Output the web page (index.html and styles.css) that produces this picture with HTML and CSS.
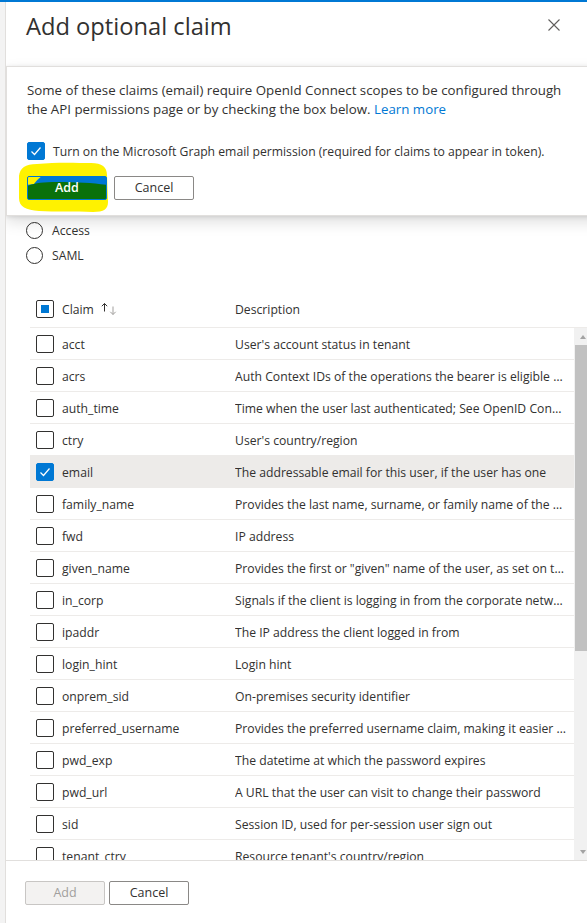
FILE: index.html
```html
<!DOCTYPE html>
<html lang="en">
<head>
  <meta charset="UTF-8">
  <title>Add optional claim</title>
  <link rel="stylesheet" href="styles.css">
</head>
<body>
  <div class="topbar"></div>
  <div class="panel">
    <div class="panel-header">
      <h1 class="panel-title">Add optional claim</h1>
      <button class="close-btn" aria-label="Close">
        <svg width="12" height="12" viewBox="0 0 12 12"><path d="M0.5 0.5 L11.5 11.5 M11.5 0.5 L0.5 11.5" stroke="#605e5c" stroke-width="1.1"/></svg>
      </button>
    </div>

    <div class="panel-body">
      <div class="callout">
        <p class="callout-text">Some of these claims (email) require OpenId Connect scopes to be configured through the API permissions page or by checking the box below. <a href="#">Learn more</a></p>
        <label class="callout-check">
          <span class="check on"><svg width="16" height="16" viewBox="0 0 16 16"><path d="M3.5 8.5 L6.5 11.5 L12.5 4.5" fill="none" stroke="#fff" stroke-width="1.2"/></svg></span>
          Turn on the Microsoft Graph email permission (required for claims to appear in token).
        </label>
        <div class="callout-actions">
          <svg class="highlight" width="92" height="52" viewBox="0 0 92 52"><path d="M2 14 C3 6 8 2 20 2 C40 0 60 1 74 1 C85 1 90 5 90 13 L91 40 C91 47 87 50 76 50 C58 49 38 50 22 49 C9 48 2 45 2 36 Z" fill="#fff200"/></svg>
          <button class="btn primary">
            <svg class="swoosh" width="80" height="24" viewBox="0 0 80 24"><path d="M0 0 L15 0 C11 3 9 5 7 8 L0 9 Z" fill="#fff200"/><path d="M0 10 C8 7 16 6 30 6 C50 6 66 7 80 9 L80 24 L0 24 Z" fill="#0a710a"/></svg>
            <span>Add</span>
          </button>
          <button class="btn">Cancel</button>
        </div>
      </div>

      <div class="field-label">Token type</div>
      <div class="radio-list">
        <label class="radio"><span class="radio-dot"></span>ID</label>
        <label class="radio"><span class="radio-dot"></span>Access</label>
        <label class="radio"><span class="radio-dot"></span>SAML</label>
      </div>

      <div class="claims">
        <div class="claims-head">
          <div class="cell-claim">
            <span class="check partial"></span>
            Claim
            <svg class="sort-icon" width="16" height="14" viewBox="0 0 16 14">
              <path d="M3.5 9.5 V1.5 M0.8 4.2 L3.5 1.5 L6.2 4.2" fill="none" stroke="#323130" stroke-width="1"/>
              <path d="M12 4.5 V12.5 M9.3 9.8 L12 12.5 L14.7 9.8" fill="none" stroke="#a19f9d" stroke-width="1"/>
            </svg>
          </div>
          <div class="cell-desc">Description</div>
        </div>
        <div class="claims-scroll">
          <div class="claims-rows">
            <div class="row"><div class="cell-claim"><span class="check"></span>acct</div><div class="cell-desc">User's account status in tenant</div></div>
            <div class="row"><div class="cell-claim"><span class="check"></span>acrs</div><div class="cell-desc">Auth Context IDs of the operations the bearer is eligible to perform</div></div>
            <div class="row"><div class="cell-claim"><span class="check"></span>auth_time</div><div class="cell-desc">Time when the user last authenticated; See OpenID Connect spec</div></div>
            <div class="row"><div class="cell-claim"><span class="check"></span>ctry</div><div class="cell-desc">User's country/region</div></div>
            <div class="row selected"><div class="cell-claim"><span class="check on"><svg width="16" height="16" viewBox="0 0 16 16"><path d="M3.5 8.5 L6.5 11.5 L12.5 4.5" fill="none" stroke="#fff" stroke-width="1.2"/></svg></span>email</div><div class="cell-desc">The addressable email for this user, if the user has one</div></div>
            <div class="row"><div class="cell-claim"><span class="check"></span>family_name</div><div class="cell-desc">Provides the last name, surname, or family name of the user as defined in the user object</div></div>
            <div class="row"><div class="cell-claim"><span class="check"></span>fwd</div><div class="cell-desc">IP address</div></div>
            <div class="row"><div class="cell-claim"><span class="check"></span>given_name</div><div class="cell-desc">Provides the first or "given" name of the user, as set on the user object</div></div>
            <div class="row"><div class="cell-claim"><span class="check"></span>in_corp</div><div class="cell-desc">Signals if the client is logging in from the corporate network</div></div>
            <div class="row"><div class="cell-claim"><span class="check"></span>ipaddr</div><div class="cell-desc">The IP address the client logged in from</div></div>
            <div class="row"><div class="cell-claim"><span class="check"></span>login_hint</div><div class="cell-desc">Login hint</div></div>
            <div class="row"><div class="cell-claim"><span class="check"></span>onprem_sid</div><div class="cell-desc">On-premises security identifier</div></div>
            <div class="row"><div class="cell-claim"><span class="check"></span>preferred_username</div><div class="cell-desc">Provides the preferred username claim, making it easier for apps to provide username hints</div></div>
            <div class="row"><div class="cell-claim"><span class="check"></span>pwd_exp</div><div class="cell-desc">The datetime at which the password expires</div></div>
            <div class="row"><div class="cell-claim"><span class="check"></span>pwd_url</div><div class="cell-desc">A URL that the user can visit to change their password</div></div>
            <div class="row"><div class="cell-claim"><span class="check"></span>sid</div><div class="cell-desc">Session ID, used for per-session user sign out</div></div>
            <div class="row"><div class="cell-claim"><span class="check"></span>tenant_ctry</div><div class="cell-desc">Resource tenant's country/region</div></div>
            <div class="row"><div class="cell-claim"><span class="check"></span>tenant_region_scope</div><div class="cell-desc">Region of the resource tenant</div></div>
          </div>
          <div class="scrollbar">
            <span class="sb-arrow up"></span>
            <div class="sb-track"><div class="sb-thumb"></div></div>
            <span class="sb-arrow down"></span>
          </div>
        </div>
      </div>
    </div>

    <div class="panel-footer">
      <button class="btn disabled">Add</button>
      <button class="btn">Cancel</button>
    </div>
  </div>
</body>
</html>
```

FILE: styles.css
```css
* {
  box-sizing: border-box;
}
html, body {
  margin: 0;
  height: 100%;
}
body {
  background: #f3f3f3;
  color: #323130;
  font-family: "Open Sans", "Segoe UI", sans-serif;
  font-size: 12.2px;
  overflow: hidden;
}
.topbar {
  height: 2px;
  background: #0078d4;
}
.panel {
  margin-left: 5px;
  height: calc(100% - 2px);
  background: #fff;
  border-left: 1px solid #e1dfdd;
  display: flex;
  flex-direction: column;
  overflow: hidden;
}
.panel-header {
  flex: none;
  height: 64px;
  display: flex;
  justify-content: space-between;
  align-items: flex-start;
  padding: 8px 17px 0 20px;
}
.panel-title {
  margin: 0;
  font-size: 23.7px;
  font-weight: 400;
  line-height: 32px;
}
.close-btn {
  width: 32px;
  height: 32px;
  margin-top: -1px;
  padding: 0;
  border: 0;
  background: none;
  display: flex;
  align-items: center;
  justify-content: center;
}

.panel-body {
  flex: 1;
  min-height: 0;
  position: relative;
  display: flex;
  flex-direction: column;
  padding: 102px 0 0 20px;
}

/* popup callout */
.callout {
  position: absolute;
  top: 0;
  left: 0;
  right: -20px;
  height: 150px;
  padding: 14px 20px 0 20px;
  background: #fff;
  border: 1px solid #e1dfdd;
  box-shadow: 0 6px 14px rgba(0, 0, 0, 0.13), 0 1px 4px rgba(0, 0, 0, 0.11);
  z-index: 5;
}
.callout-text {
  margin: 0;
  max-width: 540px;
  font-size: 13.3px;
  line-height: 18.5px;
}
.callout-text a {
  color: #0078d4;
  text-decoration: none;
}
.callout-check {
  display: flex;
  align-items: center;
  gap: 8px;
  margin-top: 24px;
  height: 18px;
}
.callout-actions {
  position: relative;
  display: flex;
  gap: 7px;
  margin-top: 16px;
}
.highlight {
  position: absolute;
  left: -10px;
  top: -14px;
}

.btn {
  position: relative;
  height: 24px;
  min-width: 80px;
  padding: 0 16px;
  border: 1px solid #8a8886;
  border-radius: 2px;
  background: #fff;
  color: #323130;
  font-family: inherit;
  font-size: 12.5px;
  line-height: 20px;
}
.btn.primary {
  background: #0078d4;
  border-color: #0078d4;
  color: #fff;
  font-weight: 600;
  overflow: hidden;
}
.btn.primary span {
  position: relative;
}
.swoosh {
  position: absolute;
  left: -1px;
  top: -1px;
}
.btn.disabled {
  background: #f3f2f1;
  border-color: #c8c6c4;
  color: #a19f9d;
}

.field-label {
  line-height: 19px;
  margin-bottom: 6px;
}
.radio-list {
  display: flex;
  flex-direction: column;
}
.radio {
  display: flex;
  align-items: center;
  gap: 9px;
  height: 25px;
}
.radio-dot {
  width: 17px;
  height: 17px;
  border: 1px solid #323130;
  border-radius: 50%;
}

/* claims list */
.claims {
  flex: 1;
  min-height: 0;
  display: flex;
  flex-direction: column;
  margin: 24px -4px 0 4px;
}
.claims-head {
  flex: none;
  display: grid;
  grid-template-columns: 205px 1fr;
  align-items: center;
  height: 36px;
  padding-bottom: 1px;
  border-bottom: 1px solid #edebe9;
}
.cell-claim {
  display: flex;
  align-items: center;
  gap: 8px;
  padding-left: 6px;
  white-space: nowrap;
}
.cell-desc {
  padding-right: 8px;
  white-space: nowrap;
  overflow: hidden;
  text-overflow: ellipsis;
}
.sort-icon {
  margin-left: -1px;
}
.check {
  flex: none;
  width: 18px;
  height: 18px;
  border: 1px solid #323130;
  border-radius: 2px;
  display: flex;
  align-items: center;
  justify-content: center;
}
.check.on {
  background: #0078d4;
  border-color: #0078d4;
}
.check.partial::after {
  content: "";
  width: 8px;
  height: 8px;
  background: #0078d4;
}

.claims-scroll {
  flex: 1;
  min-height: 0;
  display: flex;
  overflow: hidden;
}
.claims-rows {
  flex: 1;
  min-width: 0;
}
.row {
  display: grid;
  grid-template-columns: 205px 1fr;
  align-items: center;
  height: 32px;
  padding-top: 1px;
  border-bottom: 1px solid #edebe9;
}
.row .check {
  margin-top: -1px;
}
.row.selected {
  background: #edebe9;
}
.scrollbar {
  flex: none;
  width: 17px;
  background: #f1f1f1;
  display: flex;
  flex-direction: column;
}
.sb-arrow {
  flex: none;
  height: 17px;
  display: flex;
  align-items: center;
  justify-content: center;
}
.sb-arrow::after {
  content: "";
  border-left: 3.5px solid transparent;
  border-right: 3.5px solid transparent;
}
.sb-arrow.up::after {
  border-bottom: 4px solid #a3a3a3;
}
.sb-arrow.down::after {
  border-top: 4px solid #a3a3a3;
}
.sb-track {
  flex: 1;
}
.sb-thumb {
  height: 306px;
  margin: 0 2px 0 1px;
  background: #c1c1c1;
}

.panel-footer {
  flex: none;
  height: 63px;
  display: flex;
  gap: 4px;
  padding: 20px 19px 0;
  border-top: 1px solid #e1dfdd;
}
```
